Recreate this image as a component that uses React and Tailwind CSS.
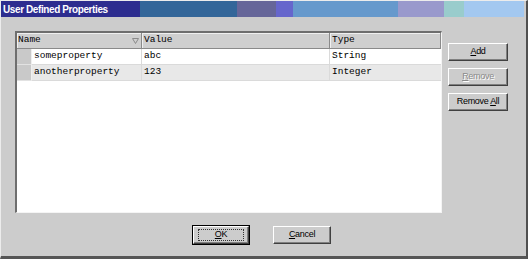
/**
 * User Defined Properties — classic desktop dialog with a property grid.
 */

// Title bar colour strips, left to right (width in px)
const TITLE_STRIPS = [
  { w: 139, c: 'bg-[#2d2d8f]' },
  { w: 97, c: 'bg-[#336699]' },
  { w: 39, c: 'bg-[#666699]' },
  { w: 17, c: 'bg-[#6666cc]' },
  { w: 105, c: 'bg-[#6699cc]' },
  { w: 46, c: 'bg-[#9999cc]' },
  { w: 20, c: 'bg-[#99cccc]' },
  { w: 60, c: 'bg-[#a3c8f0]' },
]

const ROWS = [
  { name: 'someproperty', value: 'abc', type: 'String', bg: 'bg-white' },
  { name: 'anotherproperty', value: '123', type: 'Integer', bg: 'bg-[#e8e8e8]' },
]

const mono = "font-['Liberation_Mono','Courier_New',monospace] text-[9.5px]"
const sans = "font-['Liberation_Sans',Arial,sans-serif] text-[9px] tracking-[-0.3px]"

function Button({ children, disabled, className = '' }) {
  return (
    <div
      className={[
        'h-[18px] w-[60px] flex items-center justify-center bg-[#cccccc] border border-t-white border-l-white border-r-[#404040] border-b-[#404040] shadow-[inset_-1px_-1px_0_#808080]',
        sans,
        disabled ? 'text-[#8a8a8a] [text-shadow:1px_1px_0_#fff]' : 'text-black',
        className,
      ].join(' ')}
    >
      {children}
    </div>
  )
}

function SortMark() {
  return (
    <svg width="7" height="6" viewBox="0 0 7 6" className="block">
      <path d="M0.5 0.5 H6.5 L3.5 5.5 Z" fill="none" stroke="#8a8a8a" strokeWidth="1" />
    </svg>
  )
}

export default function App() {
  return (
    <div className="w-[528px] h-[259px] bg-[#cccccc] box-border border-t border-l border-t-[#ececec] border-l-[#ececec] border-r-2 border-r-[#505050] border-b-[3px] border-b-[#555555] flex flex-col overflow-hidden">
      {/* Title bar */}
      <div className="relative h-[16px] mr-[1px] flex">
        {TITLE_STRIPS.map((s, i) => (
          <div key={i} className={s.c} style={{ width: s.w }} />
        ))}
        <span className="absolute left-[2px] top-0 h-[16px] flex items-center text-white font-bold text-[10px] tracking-[-0.4px] font-['Liberation_Sans',Arial,sans-serif]">
          User Defined Properties
        </span>
      </div>

      {/* Table + side buttons */}
      <div className="flex mt-[14px] ml-[14px]">
        <div className="w-[427px] h-[182px] box-border bg-white border-t-2 border-l-2 border-t-[#6e6e6e] border-l-[#6e6e6e] border-r border-b border-r-[#f4f4f4] border-b-[#f4f4f4]">
          {/* Header */}
          <div className={'flex h-[16px] bg-[#cfcfcf] text-black ' + mono}>
            <div className="w-[125px] flex items-center justify-between pl-[1px] pr-[2px] border-r border-b border-r-[#8a8a8a] border-b-[#8a8a8a] shadow-[inset_1px_1px_0_#f0f0f0]">
              <span>Name</span>
              <SortMark />
            </div>
            <div className="w-[188px] flex items-center pl-[2px] border-r border-b border-r-[#8a8a8a] border-b-[#8a8a8a] shadow-[inset_1px_1px_0_#f0f0f0]">
              Value
            </div>
            <div className="flex-1 flex items-center pl-[2px] border-r border-b border-r-[#8a8a8a] border-b-[#8a8a8a] shadow-[inset_1px_1px_0_#f0f0f0]">
              Type
            </div>
          </div>

          {/* Rows */}
          {ROWS.map((r) => (
            <div key={r.name} className={'flex h-[16px] text-black ' + mono}>
              <div className="w-[15px] bg-[#c9c9c9] border-r border-b border-r-[#efefef] border-b-[#e2e2e2]" />
              <div className={'w-[110px] flex items-center pl-[2px] border-r border-b border-[#dadada] ' + r.bg}>{r.name}</div>
              <div className={'w-[188px] flex items-center pl-[2px] border-r border-b border-[#dadada] ' + r.bg}>{r.value}</div>
              <div className={'flex-1 flex items-center pl-[2px] border-b border-[#dadada] ' + r.bg}>{r.type}</div>
            </div>
          ))}
        </div>

        <div className="ml-[6px] mt-[12px] flex flex-col gap-[7px]">
          <Button><span><u>A</u>dd</span></Button>
          <Button disabled><span><u>R</u>emove</span></Button>
          <Button><span>Remove <u>A</u>ll</span></Button>
        </div>
      </div>

      {/* Bottom buttons */}
      <div className="flex mt-[12px] pl-[191px]">
        <div className="w-[58px] h-[20px] border border-black">
          <div className={'h-full w-full flex items-center justify-center bg-[#cccccc] border border-t-white border-l-white border-r-[#404040] border-b-[#404040] shadow-[inset_-1px_-1px_0_#808080] text-black ' + sans}>
            <div className="w-[46px] h-[12px] flex items-center justify-center border border-dotted border-[#333]">
              <span><u>O</u>K</span>
            </div>
          </div>
        </div>
        <Button className="ml-[23px] mt-[1px] !w-[58px]"><span><u>C</u>ancel</span></Button>
      </div>
    </div>
  )
}
